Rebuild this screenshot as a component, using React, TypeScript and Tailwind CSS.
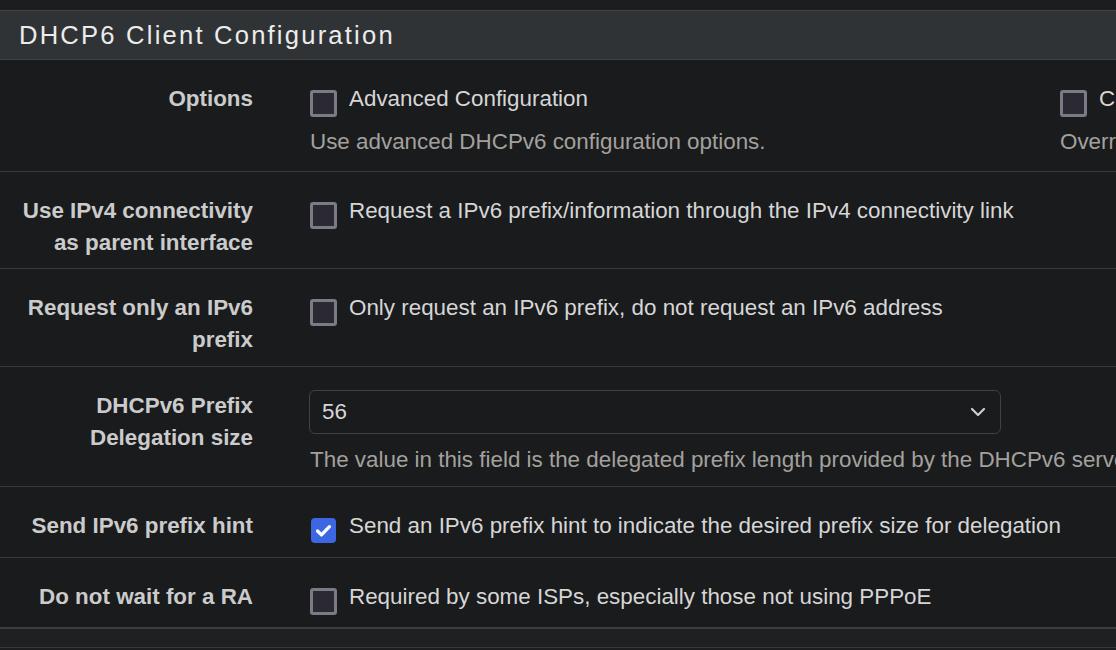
import React from 'react';

function Box({ checked = false }: { checked?: boolean }) {
  if (checked) {
    return (
      <span className="mt-[8px] ml-[1px] mr-[1px] flex h-[25px] w-[25px] shrink-0 items-center justify-center rounded-[4px] bg-[#3c66e2]">
        <svg width="19" height="19" viewBox="0 0 16 16" fill="none">
          <path d="M3 8.4l3.3 3.3L13 4.8" stroke="#fff" strokeWidth="2.8" strokeLinecap="round" strokeLinejoin="round" />
        </svg>
      </span>
    );
  }
  return (
    <span className="mt-[7px] block h-[27px] w-[27px] shrink-0 rounded-[3px] border-[3px] border-[#7b7a85] bg-[#2b2a33]" />
  );
}

function Check({ label, checked }: { label: string; checked?: boolean }) {
  return (
    <div className="flex items-start gap-[12px] whitespace-nowrap">
      <Box checked={checked} />
      <span className="leading-[32px] text-[#d6d6d6]">{label}</span>
    </div>
  );
}

function Row({
  label,
  children,
  last = false,
  pb = 'pb-[10px]',
}: {
  label: React.ReactNode;
  children: React.ReactNode;
  last?: boolean;
  pb?: string;
}) {
  return (
    <div
      className={`flex pt-[23px] ${pb} ${
        last ? 'border-b-2 border-[#3c3d3f]' : 'border-b border-[#38393b]'
      }`}
    >
      <div className="w-[253px] shrink-0 text-right font-bold leading-[32px] text-[#cbcbcb]">{label}</div>
      <div className="ml-[57px] min-w-0 flex-1">{children}</div>
    </div>
  );
}

export default function App() {
  return (
    <div
      className="h-[650px] w-[1116px] overflow-hidden bg-[#1c1d1f] pt-[10px] text-[22.4px]"
      style={{ fontFamily: '"Liberation Sans", Arial, sans-serif' }}
    >
      {/* panel heading */}
      <div className="flex h-[50px] items-center border-y border-[#3f4245] bg-[#303336] pl-[19px]">
        <h2 className="text-[25.6px] tracking-[2.2px] text-[#ececec]">DHCP6 Client Configuration</h2>
      </div>

      <div className="bg-[#1a1b1d]">
        <Row label="Options">
          <div className="flex whitespace-nowrap">
            <div className="w-[750px] shrink-0">
              <Check label="Advanced Configuration" />
              <p className="mt-[9px] pb-[3px] leading-[32px] text-[#a3a19e]">
                Use advanced DHCPv6 configuration options.
              </p>
            </div>
            <div className="shrink-0">
              <Check label="Configuration Override" />
              <p className="mt-[9px] leading-[32px] text-[#a3a19e]">
                Override the configuration from this file.
              </p>
            </div>
          </div>
        </Row>

        <Row
          pb="pb-[9px]"
          label={
            <>
              Use IPv4 connectivity
              <br />
              as parent interface
            </>
          }
        >
          <Check label="Request a IPv6 prefix/information through the IPv4 connectivity link" />
        </Row>

        <Row
          label={
            <>
              Request only an IPv6
              <br />
              prefix
            </>
          }
        >
          <Check label="Only request an IPv6 prefix, do not request an IPv6 address" />
        </Row>

        <Row
          label={
            <>
              DHCPv6 Prefix
              <br />
              Delegation size
            </>
          }
        >
          <div className="-ml-[1px] flex h-[44px] w-[692px] items-center justify-between rounded-[6px] border border-[#404142] pl-[12px] pr-[14px] text-[#d6d6d6]">
            <span>56</span>
            <svg width="16" height="10" viewBox="0 0 16 10" fill="none">
              <path d="M2 2l6 6 6-6" stroke="#cfcfcf" strokeWidth="2.2" strokeLinecap="round" strokeLinejoin="round" />
            </svg>
          </div>
          <p className="mt-[10px] whitespace-nowrap leading-[32px] text-[#a3a19e]">
            The value in this field is the delegated prefix length provided by the DHCPv6 server.
          </p>
        </Row>

        <Row label="Send IPv6 prefix hint">
          <div className="pb-[4px]">
            <Check checked label="Send an IPv6 prefix hint to indicate the desired prefix size for delegation" />
          </div>
        </Row>

        <Row label="Do not wait for a RA" last>
          <div className="pb-[2px]">
            <Check label="Required by some ISPs, especially those not using PPPoE" />
          </div>
        </Row>

        <div className="h-[18px] bg-[#1f2022]" />
      </div>
      <div className="border-t border-[#37383a] bg-[#1c1d1f]" />
    </div>
  );
}
